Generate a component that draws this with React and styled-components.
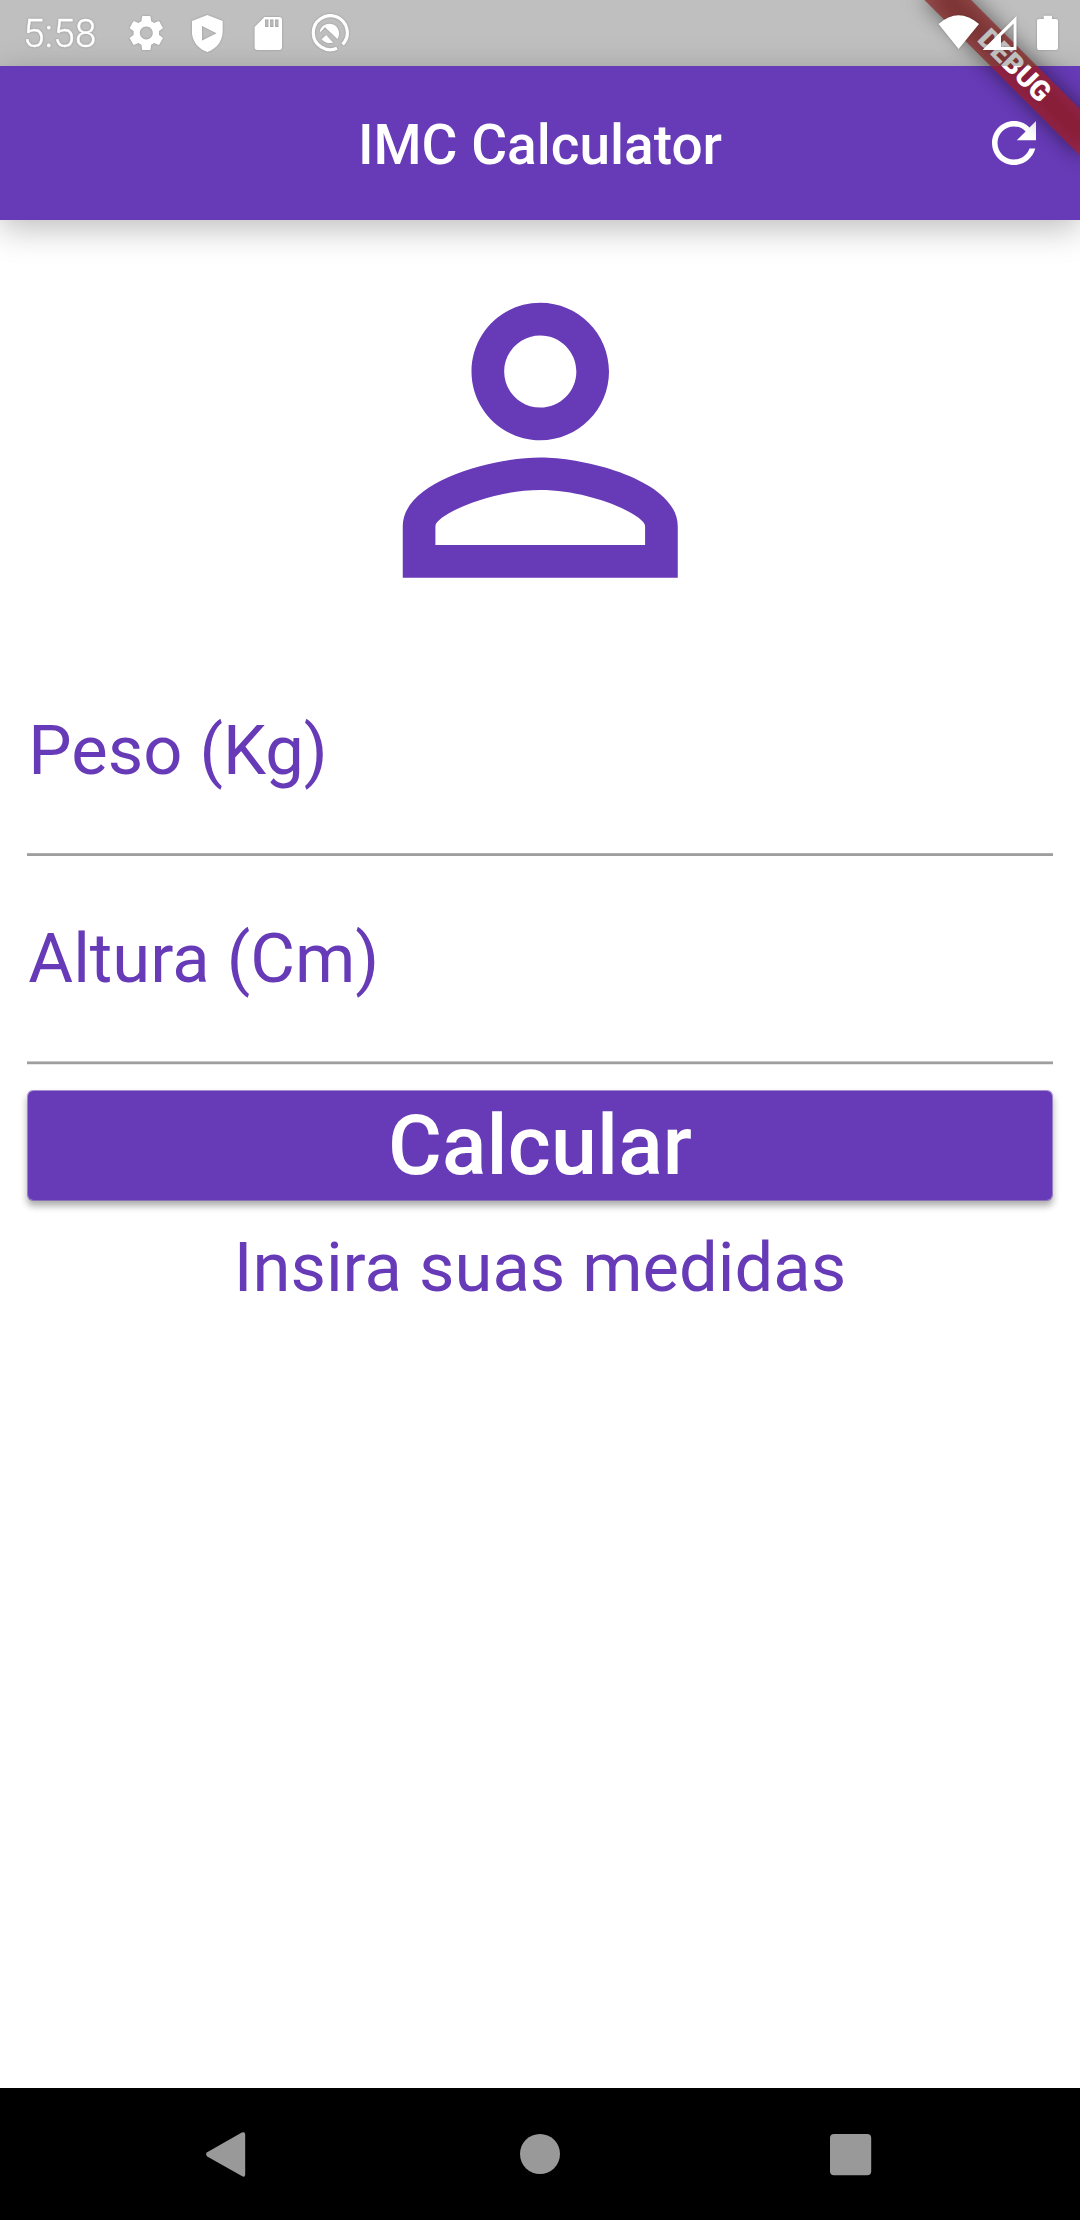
import React from "react";
import styled, { createGlobalStyle } from "styled-components";

const purple = "#673ab7";

const GlobalStyle = createGlobalStyle`
  * { box-sizing: border-box; }
  body { margin: 0; background: #fff; }
`;

const Screen = styled.div`
  position: relative;
  display: flex;
  flex-direction: column;
  width: 1080px;
  height: 2220px;
  overflow: hidden;
  background: #fff;
  font-family: Roboto, "Liberation Sans", sans-serif;
`;

const StatusBar = styled.header`
  position: relative;
  z-index: 3;
  flex: none;
  display: flex;
  justify-content: space-between;
  height: 66px;
  padding: 14px 21px 0 23px;
  background: rgba(0, 0, 0, 0.25);
`;

const StatusGroup = styled.div`
  display: flex;
  align-items: flex-start;
  filter: drop-shadow(0 0 1px rgba(0, 0, 0, 0.22));
`;

const Clock = styled.span`
  width: 106px;
  font-size: 38.5px;
  font-weight: 300;
  line-height: 40px;
  letter-spacing: 0.4px;
  color: #fff;
  -webkit-text-stroke: 0.4px #fff;
`;

const StatusIcon = styled.svg`
  flex: none;
  display: block;
  width: ${(p) => p.$w}px;
  height: 40px;
  margin-left: ${(p) => p.$gap || 0}px;
  fill: #fff;
`;

const AppBar = styled.div`
  position: relative;
  z-index: 1;
  flex: none;
  display: grid;
  grid-template-columns: 1fr auto 1fr;
  align-items: center;
  height: 154px;
  padding: 0 33px;
  background: ${purple};
  box-shadow: 0 8px 32px rgba(0, 0, 0, 0.27);
`;

const Title = styled.h1`
  grid-column: 2;
  margin: 0;
  padding-top: 3px;
  font-size: 55px;
  font-weight: 500;
  line-height: 64px;
  color: #fff;
`;

const RefreshButton = styled.button`
  justify-self: end;
  width: 66px;
  height: 66px;
  padding: 0;
  border: 0;
  background: none;
  color: #fff;
  svg { display: block; width: 66px; height: 66px; fill: currentColor; }
`;

const Ribbon = styled.div`
  position: absolute;
  z-index: 2;
  top: 77px;
  left: 970px;
  width: 220px;
  height: 33px;
  transform: rotate(45deg);
  transform-origin: 110px -77px;
  display: flex;
  align-items: center;
  justify-content: center;
  &::before, &::after { content: ""; position: absolute; inset: 0; }
  &::before { background: rgba(0, 0, 0, 0.5); filter: blur(11px); }
  &::after { background: rgba(183, 28, 28, 0.627); }
`;

const RibbonText = styled.span`
  position: relative;
  z-index: 1;
  padding-bottom: 2px;
  font-size: 28.05px;
  font-weight: 900;
  line-height: 33px;
  color: #fff;
`;

const Content = styled.main`
  flex: 1;
  display: flex;
  flex-direction: column;
  padding: 13.5px 27px 0;
`;

const Person = styled.svg`
  align-self: center;
  flex: none;
  width: 412.5px;
  height: 412.5px;
  fill: ${purple};
`;

const Field = styled.label`
  flex: none;
  height: ${(p) => p.$height}px;
  padding: ${(p) => p.$top}px 0 0 1.3px;
  font-size: 68.75px;
  line-height: 80px;
  color: ${purple};
`;

const Underline = styled.div`
  flex: none;
  height: 4px;
  background: linear-gradient(
    ${(p) => p.$head} 1px,
    #9e9e9e 1px,
    #9e9e9e 3px,
    ${(p) => p.$tail} 3px
  );
`;

const Submit = styled.button`
  flex: none;
  height: 111px;
  margin-top: 25px;
  padding: 0 0 1px;
  border: 1px solid rgba(103, 58, 183, 0.55);
  border-radius: 6px;
  background: ${purple};
  background-clip: padding-box;
  box-shadow: 0 5px 7px rgba(0, 0, 0, 0.32);
  font-family: inherit;
  font-size: 82.5px;
  font-weight: 500;
  line-height: 97px;
  letter-spacing: 0.15px;
  color: #fff;
`;

const Result = styled.p`
  margin: 26.5px 0 0;
  font-size: 68.75px;
  line-height: 80px;
  text-align: center;
  color: ${purple};
`;

const NavBar = styled.nav`
  flex: none;
  display: grid;
  grid-template-columns: 452px 176px 444px;
  align-items: center;
  justify-items: center;
  height: 132px;
  background: #000;
  svg { display: block; width: 48px; height: 48px; fill: #999; }
`;

export default function App() {
  return (
    <>
      <GlobalStyle />
      <Screen>
        <StatusBar>
          <StatusGroup>
            <Clock>5:58</Clock>
            <StatusIcon $w={36} viewBox="129 14 36 40">
              <path
                transform="translate(125.9 12.6) scale(1.7)"
                d="M19.43 12.98c.04-.32.07-.64.07-.98s-.03-.66-.07-.98l2.11-1.65c.19-.15.24-.42.12-.64l-2-3.46c-.12-.22-.39-.3-.61-.22l-2.49 1c-.52-.4-1.08-.73-1.69-.98l-.38-2.65C14.46 2.18 14.25 2 14 2h-4c-.25 0-.46.18-.49.42l-.38 2.65c-.61.25-1.17.59-1.69.98l-2.49-1c-.23-.09-.49 0-.61.22l-2 3.46c-.13.22-.07.49.12.64l2.11 1.65c-.04.32-.07.65-.07.98s.03.66.07.98l-2.11 1.65c-.19.15-.24.42-.12.64l2 3.46c.12.22.39.3.61.22l2.49-1c.52.4 1.08.73 1.69.98l.38 2.65c.03.24.24.42.49.42h4c.25 0 .46-.18.49-.42l.38-2.65c.61-.25 1.17-.59 1.69-.98l2.49 1c.23.09.49 0 .61-.22l2-3.46c.12-.22.07-.49-.12-.64l-2.11-1.65zM12 15.8c-2.1 0-3.8-1.7-3.8-3.8s1.7-3.8 3.8-3.8 3.8 1.7 3.8 3.8-1.7 3.8-3.8 3.8z"
              />
            </StatusIcon>
            <StatusIcon $w={32} $gap={27} viewBox="192 14 32 40">
              <path
                fillRule="evenodd"
                d="M207.3 15 L222.7 21 V31 C222.7 41 216.5 49 207.3 52 C198 49 191.8 41 191.8 31 V21 Z M202 26 V40.5 L216.5 33.2 Z"
              />
            </StatusIcon>
            <StatusIcon $w={28} $gap={30} viewBox="254 14 28 40">
              <path
                fillRule="evenodd"
                d="M264.5 17 H279 Q282 17 282 20 V47 Q282 50 279 50 H257.5 Q254.6 50 254.6 47 V27 Z M265 19.5 V27 H268.5 V19.5 Z M270 19.5 V27 H273.5 V19.5 Z M275 19.5 V27 H278.5 V19.5 Z"
              />
            </StatusIcon>
            <StatusIcon $w={38} $gap={29} viewBox="311 14 38 40">
              <path
                d="M342.6 44.4 A17 17 0 1 0 337 48.3"
                fill="none"
                stroke="#fff"
                strokeWidth="3.2"
              />
              <path d="M319.8 31 A9.8 9.8 0 1 1 337.4 39 L325 27.2 L320.4 32 Z" />
              <path d="M321.6 39.2 L326.2 35 L333 42.4 A9.8 9.8 0 0 1 321.6 39.2 Z" />
            </StatusIcon>
          </StatusGroup>
          <StatusGroup>
            <StatusIcon $w={42} viewBox="938 14 42 40">
              <path d="M938.5 24 Q958.5 6.5 979 24 L958.6 49 Z" />
            </StatusIcon>
            <StatusIcon $w={34} $gap={3} viewBox="983 14 34 40">
              <path
                fillRule="evenodd"
                d="M1016.5 16 V50 H982.5 Z M1013.6 23.5 L1001 36 V47 H1013.6 Z"
              />
            </StatusIcon>
            <StatusIcon $w={22} $gap={20} viewBox="1037 14 22 40">
              <path d="M1043.7 15.7 H1052 V19 H1056 Q1058 19 1058 21 V48 Q1058 50 1056 50 H1039 Q1037 50 1037 48 V21 Q1037 19 1039 19 H1043.7 Z" />
            </StatusIcon>
          </StatusGroup>
        </StatusBar>
        <AppBar>
          <Title>IMC Calculator</Title>
          <RefreshButton aria-label="Refresh">
            <svg viewBox="0 0 24 24">
              <path d="M17.65 6.35C16.2 4.9 14.21 4 12 4c-4.42 0-7.99 3.58-7.99 8s3.57 8 7.99 8c3.73 0 6.84-2.55 7.73-6h-2.08c-.82 2.33-3.04 4-5.65 4-3.31 0-6-2.69-6-6s2.69-6 6-6c1.66 0 3.14.69 4.22 1.78L13 11h7V4l-2.35 2.35z" />
            </svg>
          </RefreshButton>
        </AppBar>
        <Ribbon>
          <RibbonText>DEBUG</RibbonText>
        </Ribbon>
        <Content>
          <Person viewBox="0 0 24 24">
            <path d="M12 5.9c1.16 0 2.1.94 2.1 2.1s-.94 2.1-2.1 2.1S9.9 9.16 9.9 8s.94-2.1 2.1-2.1m0 9c2.97 0 6.1 1.46 6.1 2.1v1.1H5.9V17c0-.64 3.13-2.1 6.1-2.1M12 4C9.79 4 8 5.79 8 8s1.79 4 4 4 4-1.79 4-4-1.79-4-4-4zm0 9c-2.67 0-8 1.34-8 4v3h16v-3c0-2.66-5.33-4-8-4z" />
          </Person>
          <Field $height={207} $top={64.5}>Peso (Kg)</Field>
          <Underline $head="#b0b0b0" $tail="#fff" />
          <Field $height={204} $top={61.5}>Altura (Cm)</Field>
          <Underline $head="#cacaca" $tail="#e8e8e8" />
          <Submit>Calcular</Submit>
          <Result>Insira suas medidas</Result>
        </Content>
        <NavBar>
          <svg viewBox="202 2130 48 48">
            <path d="M207.2 2152.3 L241.8 2132.6 Q245.2 2131.2 245.2 2134.5 V2174.5 Q245.2 2177.8 241.8 2176.1 L207.2 2156.5 Q205 2154.3 207.2 2152.3 Z" />
          </svg>
          <svg viewBox="516 2130 48 48">
            <circle cx="540" cy="2154" r="20" />
          </svg>
          <svg viewBox="826 2130 48 48">
            <rect x="830" y="2134" width="41.2" height="41.3" rx="4" />
          </svg>
        </NavBar>
      </Screen>
    </>
  );
}
